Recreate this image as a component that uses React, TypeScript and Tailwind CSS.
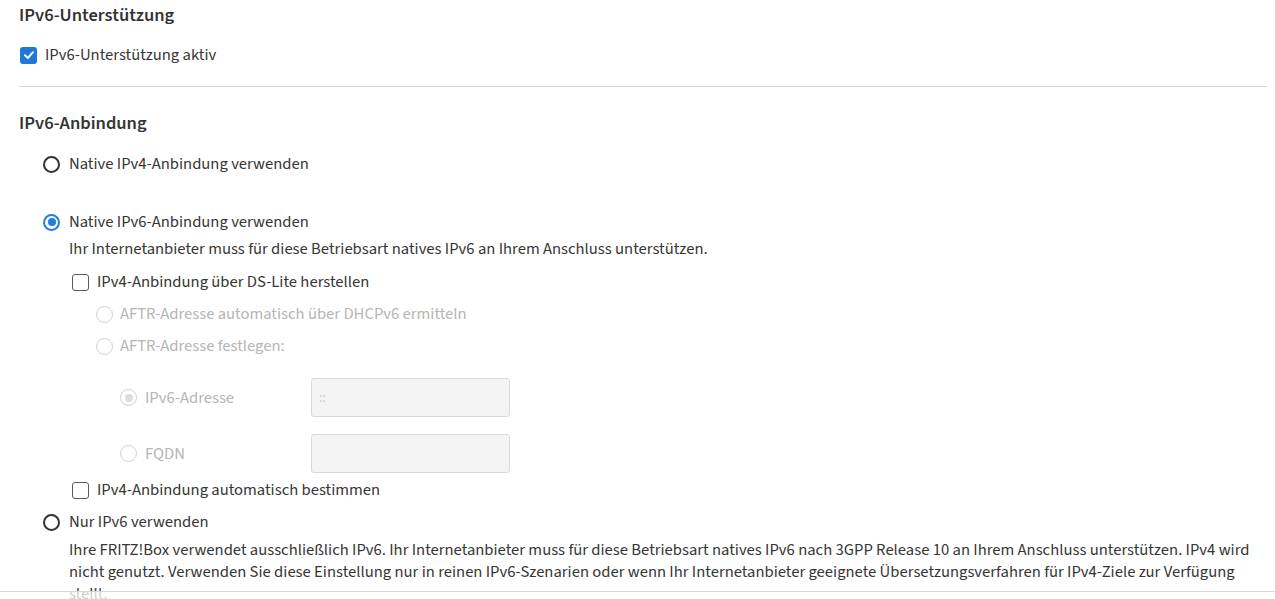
import React from "react";

const font = { fontFamily: '"Source Sans 3", "Lato", sans-serif' };

function Checkbox({ checked }: { checked?: boolean }) {
  if (checked) {
    return (
      <span className="w-[17px] h-[17px] rounded-[3px] bg-[#1f77d8] flex items-center justify-center shrink-0">
        <svg width="12" height="12" viewBox="0 0 12 12" fill="none">
          <path d="M2 6.3 L4.8 9 L10 3.2" stroke="white" strokeWidth="2" strokeLinecap="round" strokeLinejoin="round" />
        </svg>
      </span>
    );
  }
  return <span className="w-[17px] h-[17px] rounded-[3px] border-[1.5px] border-[#5a5a5a] bg-white shrink-0" />;
}

function Radio({ checked, disabled }: { checked?: boolean; disabled?: boolean }) {
  if (disabled) {
    return (
      <span className="w-[17px] h-[17px] rounded-full border-[1.5px] border-[#cfcfcf] bg-white flex items-center justify-center shrink-0">
        {checked && <span className="w-[8px] h-[8px] rounded-full bg-[#dcdcdc]" />}
      </span>
    );
  }
  if (checked) {
    return (
      <span className="w-[17px] h-[17px] rounded-full border-2 border-[#1f80e0] bg-white flex items-center justify-center shrink-0">
        <span className="w-[8px] h-[8px] rounded-full bg-[#1f80e0]" />
      </span>
    );
  }
  return <span className="w-[17px] h-[17px] rounded-full border-2 border-[#333] bg-white shrink-0" />;
}

export default function App() {
  return (
    <div className="relative h-[599px] overflow-hidden bg-white text-[#363636] text-[16.6px] leading-[22px]" style={font}>
      <div className="pl-[19px] pr-[8px]">
        <h2 className="pt-[4px] text-[18.5px] font-semibold text-[#333]">IPv6-Unterstützung</h2>
        <label className="mt-[18px] flex items-center h-[22px] pl-[1px] gap-[8px]">
          <Checkbox checked />
          <span>IPv6-Unterstützung aktiv</span>
        </label>
        <div className="mt-[20px] border-t border-[#d6d6d6]" />
        <h2 className="mt-[25px] text-[18.5px] font-semibold text-[#333]">IPv6-Anbindung</h2>

        <div className="pl-[24px]">
          <label className="mt-[19px] flex items-center h-[22px] gap-[9px]">
            <Radio />
            <span>Native IPv4-Anbindung verwenden</span>
          </label>

          <label className="mt-[36px] flex items-center h-[22px] gap-[9px]">
            <Radio checked />
            <span>Native IPv6-Anbindung verwenden</span>
          </label>

          <div className="pl-[26px]">
            <p className="mt-[5px]">Ihr Internetanbieter muss für diese Betriebsart natives IPv6 an Ihrem Anschluss unterstützen.</p>

            <label className="mt-[11px] ml-[3px] flex items-center h-[22px] gap-[8px]">
              <Checkbox />
              <span>IPv4-Anbindung über DS-Lite herstellen</span>
            </label>

            <div className="pl-[27px] text-[#b5b5b5]">
              <label className="mt-[10px] flex items-center h-[22px] gap-[7px]">
                <Radio disabled />
                <span>AFTR-Adresse automatisch über DHCPv6 ermitteln</span>
              </label>
              <label className="mt-[10px] flex items-center h-[22px] gap-[7px]">
                <Radio disabled />
                <span>AFTR-Adresse festlegen:</span>
              </label>

              <div className="pl-[24px]">
                <div className="mt-[21px] flex items-center">
                  <label className="flex items-center gap-[8px] w-[191px]">
                    <Radio disabled checked />
                    <span>IPv6-Adresse</span>
                  </label>
                  <div className="w-[199px] h-[39px] rounded-[3px] border border-[#d9d9d9] bg-[#f4f4f4] flex items-center pl-[7px] text-[13px] text-[#c8c8c8]">
                    ::
                  </div>
                </div>
                <div className="mt-[17px] flex items-center">
                  <label className="flex items-center gap-[8px] w-[191px]">
                    <Radio disabled />
                    <span>FQDN</span>
                  </label>
                  <div className="w-[199px] h-[39px] rounded-[3px] border border-[#d9d9d9] bg-[#f4f4f4]" />
                </div>
              </div>
            </div>

            <label className="mt-[6px] ml-[3px] flex items-center h-[22px] gap-[8px]">
              <Checkbox />
              <span>IPv4-Anbindung automatisch bestimmen</span>
            </label>
          </div>

          <label className="mt-[10px] flex items-center h-[22px] gap-[9px]">
            <Radio />
            <span>Nur IPv6 verwenden</span>
          </label>

          <p className="mt-[6px] pl-[26px]">
            Ihre FRITZ!Box verwendet ausschließlich IPv6. Ihr Internetanbieter muss für diese Betriebsart natives IPv6 nach 3GPP Release 10 an Ihrem Anschluss unterstützen. IPv4 wird
            <br />
            nicht genutzt. Verwenden Sie diese Einstellung nur in reinen IPv6-Szenarien oder wenn Ihr Internetanbieter geeignete Übersetzungsverfahren für IPv4-Ziele zur Verfügung
            <br />
            stellt.
          </p>
        </div>
      </div>

      <div className="absolute left-0 right-0 top-[591px] bottom-0 border-t border-[#d6d6d6] bg-white/75" />
    </div>
  );
}
